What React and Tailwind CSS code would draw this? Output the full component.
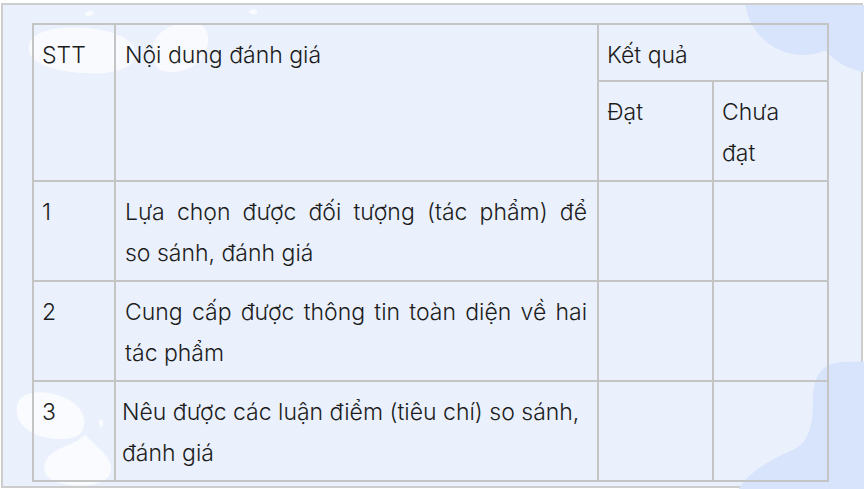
import React from 'react';

const cell = 'border-2 border-[#c4c4c4] align-top pt-[10px] pr-[10px] leading-[41px]';

const Blobs = () => (
    <svg className="absolute inset-0 pointer-events-none" width="864" height="489" viewBox="0 0 864 489">
        {/* top left pale shapes */}
        <g fill="#ffffff" opacity="0.7">
            <path d="M26 40 C30 24 60 20 92 24 C120 28 135 38 132 52 C128 66 104 70 78 68 C50 66 22 58 26 40 Z" />
            <path d="M150 42 C152 26 172 16 192 18 C206 20 208 34 202 48 C196 62 176 70 160 66 C150 62 148 52 150 42 Z" />
            <path d="M82 8 C86 5 92 5 90 9 C88 12 82 12 82 8 Z" />
            <path d="M246 6 C250 3 256 4 254 8 C252 10 246 10 246 6 Z" />
        </g>
        {/* top right blue */}
        <g fill="#d7e4fc">
            <circle cx="800" cy="-8" r="58" />
            <circle cx="872" cy="2" r="66" />
        </g>
        {/* bottom right blue */}
        <path
            fill="#d7e4fc"
            d="M733 489 C742 470 760 458 792 444 C806 436 810 420 810 395 C810 372 818 358 840 357 L864 356 L864 489 Z"
        />
        {/* bottom left pale shapes */}
        <g fill="#ffffff" opacity="0.75">
            <path d="M14 400 C18 386 40 384 60 392 C80 400 86 416 78 428 C70 436 46 436 30 428 C18 422 12 412 14 400 Z" />
            <path d="M82 430 C92 440 110 452 108 466 C106 478 88 482 66 480 C48 478 38 470 42 458 C46 446 62 442 74 436 Z" />
            <path d="M96 416 C98 413 101 414 100 420 C99 424 96 423 96 416 Z" />
        </g>
    </svg>
);

export default function App() {
    return (
        <div className="w-[864px] h-[489px] bg-white overflow-hidden" style={{ fontFamily: 'Inter, "Noto Sans", sans-serif' }}>
            <div className="relative ml-[1px] mt-[3px] w-[862px] h-[485px] border-2 border-[#cdcdcd] bg-[#eaf1fd] pl-[29px] pt-[18px]">
                <Blobs />
                <table className="relative table-fixed border-collapse text-[23px] font-light text-[#1c1c1c]">
                    <colgroup>
                        <col className="w-[82px]" />
                        <col className="w-[483px]" />
                        <col className="w-[115px]" />
                        <col className="w-[115px]" />
                    </colgroup>
                    <tbody>
                        <tr className="h-[57px]">
                            <td rowSpan={2} className={`${cell} pl-[8px]`}>STT</td>
                            <td rowSpan={2} className={`${cell} pl-[9px]`}>Nội dung đánh giá</td>
                            <td colSpan={2} className={`${cell} pl-[8px]`}>Kết quả</td>
                        </tr>
                        <tr className="h-[100px]">
                            <td className={`${cell} pl-[8px]`}>Đạt</td>
                            <td className={`${cell} pl-[8px]`}>Chưa đạt</td>
                        </tr>
                        <tr className="h-[100px]">
                            <td className={`${cell} pl-[8px]`}>1</td>
                            <td className={`${cell} pl-[9px]`}>
                                <span className="block [text-align-last:justify]">Lựa chọn được đối tượng (tác phẩm) để</span>
                                <span className="block">so sánh, đánh giá</span>
                            </td>
                            <td className={cell}></td>
                            <td className={cell}></td>
                        </tr>
                        <tr className="h-[100px]">
                            <td className={`${cell} pl-[8px]`}>2</td>
                            <td className={`${cell} pl-[9px] text-justify`}>Cung cấp được thông tin toàn diện về hai tác phẩm</td>
                            <td className={cell}></td>
                            <td className={cell}></td>
                        </tr>
                        <tr className="h-[100px]">
                            <td className={`${cell} pl-[8px]`}>3</td>
                            <td className={`${cell} pl-[6px] pr-[6px]`}>Nêu được các luận điểm (tiêu chí) so sánh, đánh giá</td>
                            <td className={cell}></td>
                            <td className={cell}></td>
                        </tr>
                    </tbody>
                </table>
            </div>
        </div>
    );
}
